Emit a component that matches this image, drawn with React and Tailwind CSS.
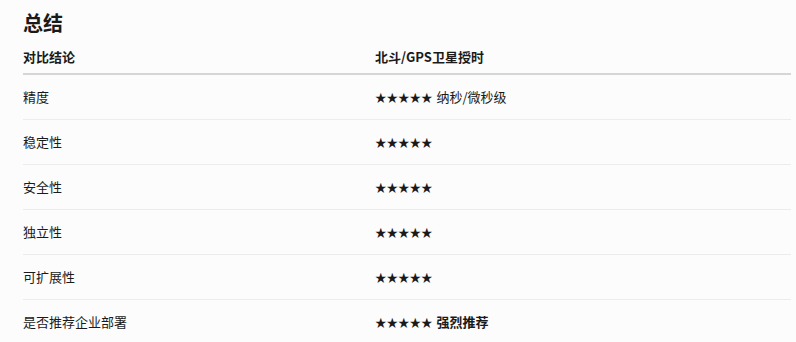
import React from 'react';

const rows = [
  { name: '精度', stars: '★★★★★', note: '纳秒/微秒级', bold: false },
  { name: '稳定性', stars: '★★★★★', note: '', bold: false },
  { name: '安全性', stars: '★★★★★', note: '', bold: false },
  { name: '独立性', stars: '★★★★★', note: '', bold: false },
  { name: '可扩展性', stars: '★★★★★', note: '', bold: false },
  { name: '是否推荐企业部署', stars: '★★★★★', note: '强烈推荐', bold: true },
];

const App = () => {
  return (
    <div
      className="min-h-[342px] bg-[#fcfcfc] pl-[23px] pr-[5px] pt-[9px] text-[#1a1a1a]"
      style={{ fontFamily: '"Noto Sans CJK SC", "Noto Sans", sans-serif' }}
    >
      <h2 className="text-[20px] font-bold leading-[28px]">总结</h2>
      <table className="mt-1 w-full border-collapse text-[13px]">
        <thead>
          <tr className="border-b-2 border-[#d6d6d6]">
            <th className="h-[33px] w-[352px] text-left font-bold">对比结论</th>
            <th className="h-[33px] text-left font-bold">北斗/GPS卫星授时</th>
          </tr>
        </thead>
        <tbody>
          {rows.map((row, i) => (
            <tr key={i} className="border-b border-[#ececec]">
              <td className="h-[45px]">{row.name}</td>
              <td className="h-[45px]">
                <span className="text-[11.5px]">{row.stars}</span>
                {row.note && (
                  <span className={row.bold ? 'ml-1 font-bold' : 'ml-1'}>{row.note}</span>
                )}
              </td>
            </tr>
          ))}
        </tbody>
      </table>
    </div>
  );
};

export default App;
